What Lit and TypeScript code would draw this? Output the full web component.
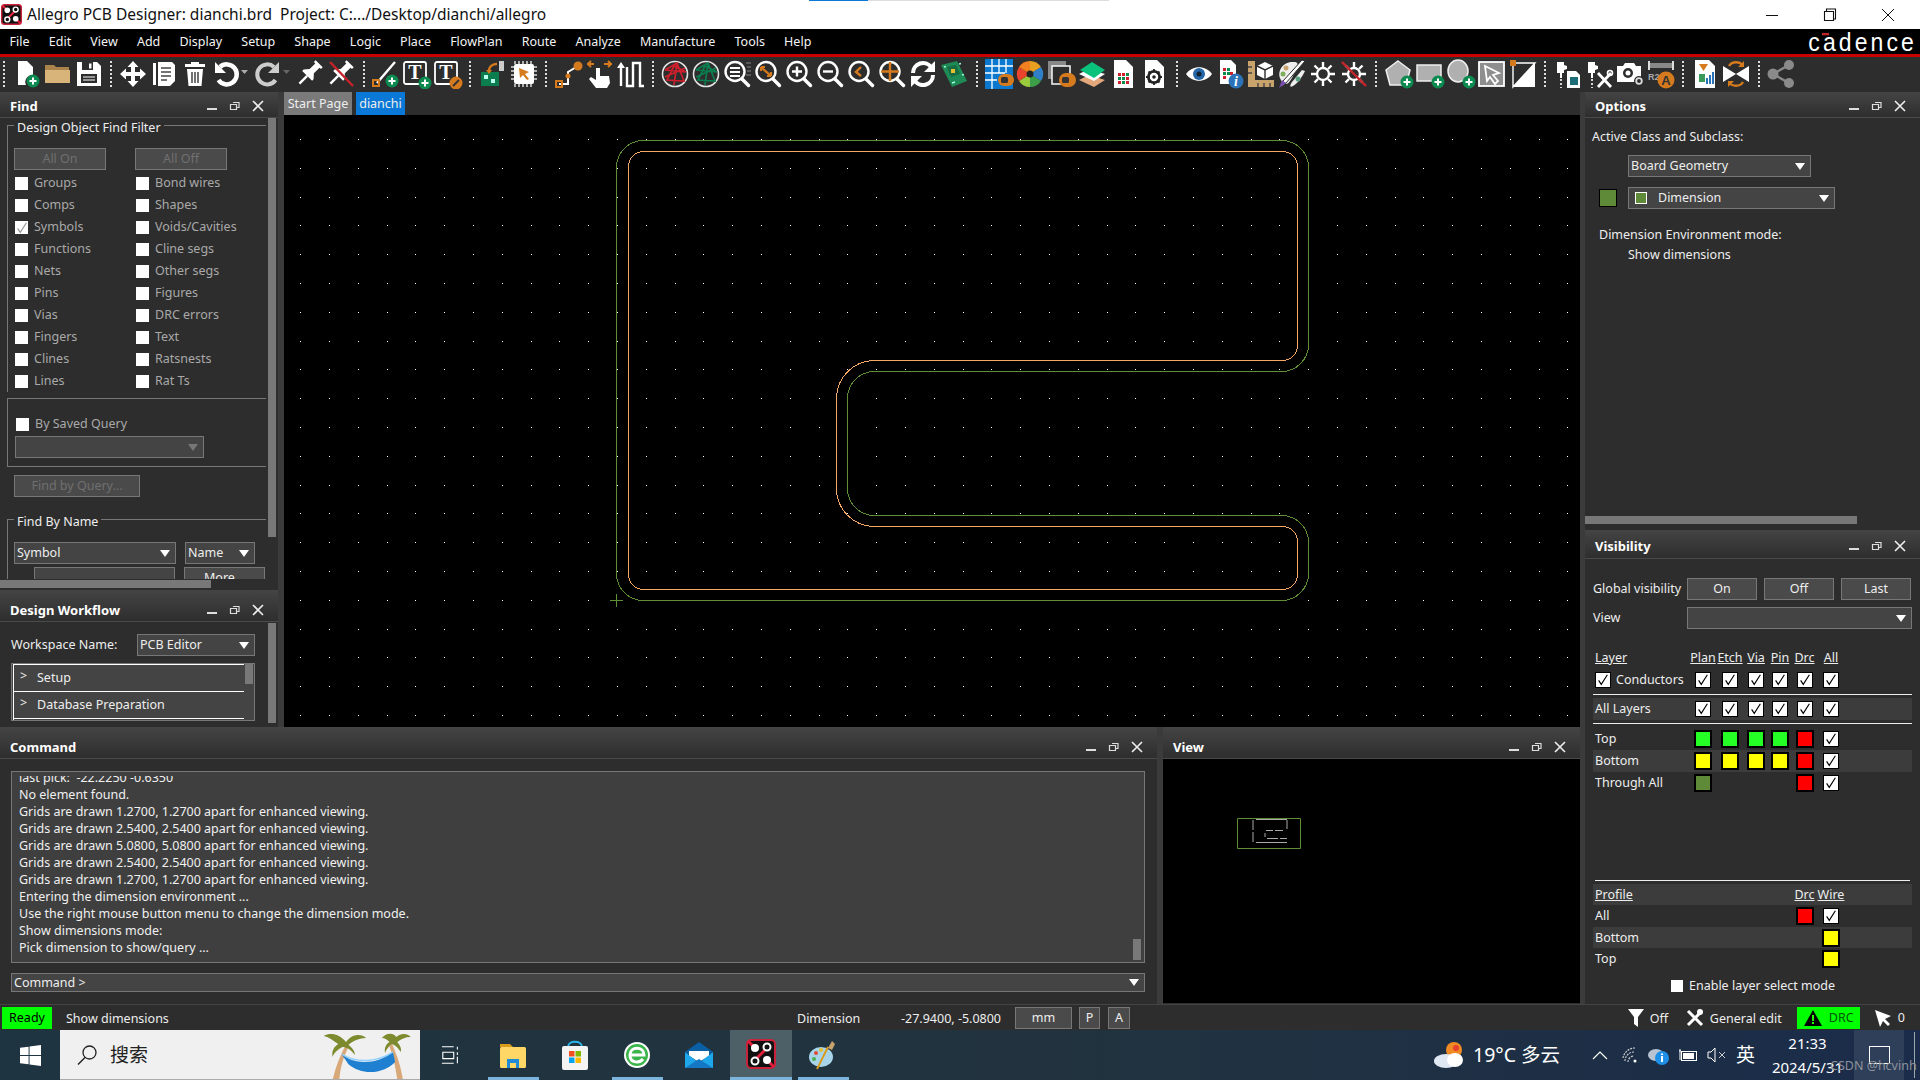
import { LitElement, css, html, svg } from "lit";
import { customElement } from "lit/decorators.js";

const ico = (body: unknown, w = 30) =>
  html`<svg class="ico" viewBox="0 0 ${w} 30" width=${w} height="30">${body}</svg>`;

const plus = (x: number, y: number) => svg`
  <circle cx=${x} cy=${y} r="6.5" fill="#0b8a50"/>
  <path d="M${x - 3.5} ${y}h7M${x} ${y - 3.5}v7" stroke="#fff" stroke-width="2"/>`;

const mag = (inner: unknown) =>
  ico(svg`<circle cx="13" cy="12.5" r="9.5" fill="none" stroke="#fff" stroke-width="2.4"/>
    <path d="M20 20l6.5 6.5" stroke="#fff" stroke-width="3.4" stroke-linecap="round"/>${inner}`);

const sun = svg`<circle cx="15" cy="15" r="6" fill="none" stroke="#fff" stroke-width="2.4"/>
  <path d="M15 3v5M15 22v5M3 15h5M22 15h5M6.5 6.5l3.5 3.5M20 20l3.5 3.5M23.5 6.5L20 10M10 20l-3.5 3.5" stroke="#fff" stroke-width="2.4"/>`;

const pin = svg`<g transform="rotate(45 15 14)"><path d="M10 1h10v2.5h-2v8l4 4.5v2H8v-2l4-4.5v-8h-2z" fill="#fff"/>
  <path d="M15 18v11" stroke="#fff" stroke-width="2.4"/></g>`;

const ratsnest = (c: string) =>
  ico(svg`<circle cx="15" cy="15" r="12.5" fill="none" stroke="#e4e4e4" stroke-width="1.6"/>
    <path d="M5 11L17 4 24 22 7 21 14 7 26 13 5 11M17 4L14 26M5 18l20-9" fill="none" stroke=${c} stroke-width="1.7"/>`);

const toggle = svg`<rect x="14" y="15" width="16" height="12" rx="6" fill="#d67a1e"/><rect x="17" y="18" width="7" height="6" rx="1.5" fill="#333"/>`;

const probe = svg`<path d="M4 3h7v3l3 1v3l-3 1v3H9v5H7v-5H4z" fill="#fff"/><path d="M8 20v9" stroke="#fff" stroke-width="1.6" stroke-dasharray="2 2"/>`;

const ICONS: Record<string, unknown> = {
  new: ico(svg`<path d="M6 2h9l6 6v8a7 7 0 0 0-7 10H6z" fill="#fff"/>${plus(21, 22)}`),
  open: ico(svg`<path d="M2 6h9l2 2h13v4H2z" fill="#a9834a"/><path d="M2 11h25v13H2z" fill="#d8b47a"/>`),
  save: ico(svg`<path d="M3 3h20l4 4v20H3z" fill="#fff"/><rect x="8" y="3" width="11" height="8" fill="#2d2d2d"/><rect x="15" y="4.5" width="2.5" height="5" fill="#fff"/><rect x="7" y="15" width="16" height="9" fill="#2d2d2d"/><path d="M9 18h12M9 21h12" stroke="#fff"/>`),
  move: ico(svg`<path d="M15 2l5.5 6H17v5h5V9.5l6 5.5-6 5.5V17h-5v5h3.5L15 28l-5.5-6H13v-5H8v3.5L2 15l6-5.5V13h5V8H9.5z" fill="#fff"/>`),
  copy: ico(svg`<path d="M4 4h3v22H4z" fill="#fff"/><path d="M9 3h14l3 3v16l-5 5H9z" fill="#fff"/><path d="M12 9h10M12 13h10M12 17h10M12 21h6" stroke="#444" stroke-width="1.5"/>`),
  trash: ico(svg`<path d="M11 3h8v2h6v3H5V5h6z" fill="#fff"/><path d="M7 10h16l-1.5 17h-13z" fill="#fff"/><path d="M12 13v11M15 13v11M18 13v11" stroke="#444" stroke-width="1.5"/>`),
  undo: ico(svg`<path d="M9 8a10 10 0 1 1-1.5 13" fill="none" stroke="#fff" stroke-width="4.5"/><path d="M4 3v11h11z" fill="#fff"/><path d="M30 11h7l-3.5 4z" fill="#aaa"/>`, 42),
  redo: ico(svg`<path d="M21 8a10 10 0 1 0 1.5 13" fill="none" stroke="#ccc" stroke-width="4"/><path d="M26 3v11H15z" fill="#ccc"/><path d="M30 11h7l-3.5 4z" fill="#666"/>`, 42),
  pin: ico(pin),
  unpin: ico(svg`${pin}<path d="M4 3l23 24" stroke="#c8232a" stroke-width="2.4"/>`),
  line: ico(svg`<path d="M6 24L24 3" stroke="#fff" stroke-width="2.4"/><rect x="2" y="21" width="6" height="6" fill="none" stroke="#d67a1e" stroke-width="2"/>${plus(21, 22)}`),
  textAdd: ico(svg`<rect x="2" y="3" width="22" height="22" rx="2" fill="none" stroke="#fff" stroke-width="1.8"/><text x="13" y="20" text-anchor="middle" font-family="Liberation Serif" font-weight="700" font-size="20" fill="#fff">T</text>${plus(23, 24)}`),
  textEdit: ico(svg`<rect x="2" y="3" width="22" height="22" rx="2" fill="none" stroke="#fff" stroke-width="1.8"/><text x="13" y="20" text-anchor="middle" font-family="Liberation Serif" font-weight="700" font-size="20" fill="#fff">T</text><circle cx="23" cy="24" r="6.5" fill="#d67a1e"/><path d="M20 27l6-6" stroke="#333" stroke-width="2"/>`),
  place: ico(svg`<rect x="3" y="13" width="18" height="14" fill="#0b7d4e"/><rect x="6" y="16" width="4" height="4" fill="#bfe"/><rect x="13" y="20" width="4" height="4" fill="#bfe"/><path d="M11 12c0-5 4-7 8-7" fill="none" stroke="#d67a1e" stroke-width="2.4"/><path d="M8 11h6l-3 4z" fill="#d67a1e"/><rect x="21" y="2" width="5" height="10" fill="#ccc"/>`),
  chip: ico(svg`<path d="M6 2v3M10 2v3M14 2v3M18 2v3M22 2v3M6 25v3M10 25v3M14 25v3M18 25v3M22 25v3M2 8h3M2 12h3M2 16h3M2 20h3M25 8h3M25 12h3M25 16h3M25 20h3" stroke="#ddd" stroke-width="1.5"/><rect x="5" y="5" width="20" height="20" rx="2" fill="#fff"/><path d="M10 9l10 4-4 2 4 5-2 1-4-5-3 3z" fill="#d67a1e"/>`),
  route: ico(svg`<path d="M5 25h9V13l10-6" fill="none" stroke="#fff" stroke-width="2"/><circle cx="24" cy="7" r="4.5" fill="#d67a1e"/><rect x="2" y="22" width="6" height="6" fill="none" stroke="#d67a1e" stroke-width="2"/><circle cx="14" cy="17" r="2.5" fill="#d67a1e"/>`),
  hand: ico(svg`<path d="M11 9h4v8h9l1 7-3 5H11l-7-9 2-2 5 3z" fill="#fff"/><path d="M2 5h7M3 5l3-3M3 5l3 3M19 5h8M26 5l-3-3M26 5l-3 3" stroke="#d67a1e" stroke-width="2" fill="none"/>`),
  tune: ico(svg`<path d="M5 27V6M11 8v19h6V4h7v23h4" fill="none" stroke="#fff" stroke-width="2.4"/><path d="M1 9h8L5 3z" fill="#fff"/>`),
  ratsR: ratsnest("#d01f2c"),
  ratsG: ratsnest("#0b7d4e"),
  zoomFit: mag(svg`<path d="M8 9h10M8 13h10M8 17h10" stroke="#fff" stroke-width="2"/><path d="M24 4h5M25 8h4M25 12h4M24 16h5" stroke="#888"/>`),
  zoomDiag: mag(svg`<path d="M8 8l10 9M8 8v4M8 8h4M18 17v-4M18 17h-4" stroke="#d67a1e" stroke-width="2.2" fill="none"/>`),
  zoomIn: mag(svg`<path d="M8 12.5h10M13 7.5v10" stroke="#fff" stroke-width="2.4"/>`),
  zoomOut: mag(svg`<path d="M8 12.5h10" stroke="#fff" stroke-width="2.4"/>`),
  zoomPrev: mag(svg`<path d="M15 8l-5 5 5 4" stroke="#d67a1e" stroke-width="2.4" fill="none"/>`),
  zoomCenter: mag(svg`<path d="M4 12.5h18M13 3v19" stroke="#d67a1e" stroke-width="2.4"/>`),
  refresh: ico(svg`<path d="M5 14A10 10 0 0 1 23 8" fill="none" stroke="#fff" stroke-width="4"/><path d="M27 2v11H16z" fill="#fff"/><path d="M25 16A10 10 0 0 1 7 22" fill="none" stroke="#fff" stroke-width="4"/><path d="M3 28V17h11z" fill="#fff"/>`),
  board: ico(svg`<path d="M2 6L18 2l10 20-15 6z" fill="#1f8a55"/><path d="M8 8l9-2 4 9-9 3z" fill="#166b42"/><rect x="12" y="10" width="4" height="4" fill="#e6c02c"/><path d="M5 8l2-.5M20 5l2-.5M23 16l2-.5M13 24l3-1" stroke="#9fd" stroke-width="1.5"/>`),
  grid: ico(svg`<rect x="1" y="0" width="28" height="30" fill="#0b78d0"/><path d="M1 7h28M1 14h20M1 21h12M8 0v30M15 0v14M22 0v14" stroke="#fff" stroke-width="1.3"/>${toggle}`),
  wheel: ico(svg`<path d="M15 15V2a13 13 0 0 1 11 6z" fill="#e8a020"/><path d="M15 15l11-7a13 13 0 0 1 0 14z" fill="#2f80c8"/><path d="M15 15l11 7a13 13 0 0 1-11 6z" fill="#3d9e4a"/><path d="M15 15v13a13 13 0 0 1-11-6z" fill="#9acb3c"/><path d="M15 15L4 22a13 13 0 0 1 0-14z" fill="#e8452c"/><path d="M15 15L4 8a13 13 0 0 1 11-6z" fill="#f08020"/><circle cx="15" cy="15" r="3.5" fill="#222"/>`),
  layers: ico(svg`<rect x="2" y="2" width="18" height="18" fill="#888"/><rect x="6" y="7" width="18" height="18" fill="#2d2d2d" stroke="#eee" stroke-width="1.6"/><rect x="13" y="14" width="17" height="14" rx="7" fill="#d67a1e"/><rect x="16" y="18" width="7" height="6" rx="1.5" fill="#333"/>`),
  stack: ico(svg`<path d="M2 21l10-5 16 5-11 7z" fill="#e3a77c"/><path d="M2 15l10-5 16 5-11 7z" fill="#fff"/><path d="M3 11l12-8 13 8-11 8z" fill="#0bc27c"/>`),
  docGrid: ico(svg`<path d="M6 1h12l7 7v21H6z" fill="#fff"/><path d="M10 14h3v3h-3zM14 14h3v3h-3zM10 22h3v3h-3zM18 18h3v3h-3zM18 22h3v3h-3z" fill="#d01f2c"/><path d="M18 14h3v3h-3zM10 18h3v3h-3zM14 18h3v3h-3zM14 22h3v3h-3z" fill="#0b8a50"/>`),
  docGear: ico(svg`<path d="M6 1h12l7 7v21H6z" fill="#fff"/><circle cx="15" cy="18" r="5.5" fill="none" stroke="#222" stroke-width="3"/><path d="M15 10v16M7 18h16M9.5 12.5l11 11M20.5 12.5l-11 11" stroke="#222" stroke-width="1.8"/><circle cx="15" cy="18" r="4.2" fill="#fff"/><circle cx="15" cy="18" r="1.8" fill="#222"/>`),
  eye: ico(svg`<path d="M2 15C8 6 22 6 28 15 22 24 8 24 2 15z" fill="#fff"/><circle cx="15" cy="15" r="6" fill="#2466a8"/><circle cx="15" cy="15" r="2.5" fill="#123"/>`),
  docInfo: ico(svg`<path d="M5 1h11l5 5v19H5z" fill="#fff"/><path d="M8 9h3v3H8zM8 17h3v3H8zM15 13h3v3h-3z" fill="#d01f2c"/><path d="M12 9h3v3h-3zM12 13h3v3h-3zM8 13h3v3H8z" fill="#0b8a50"/><circle cx="21" cy="22" r="7.5" fill="#2a73b8"/><text x="21" y="27" text-anchor="middle" font-family="Liberation Serif" font-style="italic" font-weight="700" font-size="14" fill="#fff">i</text>`),
  ruler: ico(svg`<path d="M2 2h7v19h19v7H2z" fill="#c9a36c"/><path d="M2 8h4M2 14h4M12 28v-4M18 28v-4M24 28v-4" stroke="#444" stroke-width="1.4"/><path d="M19 3l8 4v9l-8 4-8-4V7z" fill="#fff"/><path d="M11 7l8 4 8-4M19 11v9" stroke="#2d2d2d" stroke-width="1.4" fill="none"/>`),
  palette: ico(svg`<path d="M3 19C0 10 8 2 17 3c3 0 5 2 3 5-2 4-4 10-7 14-3 5-8 3-10-3z" fill="#eee"/><circle cx="9" cy="9" r="2.5" fill="#c9a36c"/><circle cx="6" cy="15" r="2.5" fill="#7fae5a"/><path d="M28 2L9 24l-5 4 2-6L25 1z" fill="#fff" stroke="#2d2d2d"/><path d="M9 24l-7 5 3-8z" fill="#7a4bb0"/><path d="M28 12c-3 6-7 12-12 15-4 2-3-1-1-4l10-12z" fill="#eee"/><circle cx="21" cy="20" r="2.5" fill="#5aa080"/>`),
  sun: ico(sun),
  sunOff: ico(svg`${sun}<path d="M3 3l24 24" stroke="#c8232a" stroke-width="2.4"/>`),
  polyAdd: ico(svg`<path d="M14 2l12 9-4 15H6L2 11z" fill="#b0b0b0" stroke="#eee" stroke-width="1.5"/>${plus(23, 23)}`),
  rectAdd: ico(svg`<rect x="2" y="6" width="24" height="16" fill="#b0b0b0" stroke="#eee" stroke-width="1.5"/>${plus(23, 23)}`),
  circAdd: ico(svg`<ellipse cx="12" cy="12" rx="10" ry="11" fill="#b0b0b0" stroke="#eee" stroke-width="1.5"/>${plus(23, 23)}`),
  select: ico(svg`<rect x="2" y="3" width="25" height="24" fill="#8e8e8e" stroke="#fff" stroke-width="1.8"/><path d="M8 7l14 7-6 2 5 6-3 3-5-7-3 4z" fill="#8e8e8e" stroke="#fff" stroke-width="1.8"/>`),
  half: ico(svg`<path d="M5 4h22v24z" fill="#2d2d2d"/><path d="M5 28L27 4v24z" fill="#fff"/><path d="M5 4h22L5 28z" fill="none" stroke="#fff" stroke-width="1.4"/><rect x="2" y="1" width="6" height="6" fill="#d67a1e"/>`),
  probeDoc: ico(svg`${probe}<path d="M14 12h9l4 4v13H14z" fill="#fff"/><rect x="17" y="18" width="8" height="8" fill="#1d6d78"/>`),
  probeTool: ico(svg`${probe}<path d="M14 14l13 14M27 14L14 28" stroke="#fff" stroke-width="2.8"/><circle cx="26" cy="14" r="2.5" fill="none" stroke="#fff" stroke-width="1.6"/>`),
  camera: ico(svg`<path d="M2 7h6l2-3h9l2 3h5v16H2z" fill="#fff"/><circle cx="13" cy="14" r="5" fill="#2d2d2d"/><circle cx="13" cy="14" r="2.5" fill="#fff"/><circle cx="24" cy="22" r="5" fill="#2d2d2d"/><circle cx="24" cy="22" r="2.8" fill="none" stroke="#ddd" stroke-width="1.8"/>`),
  r2a: ico(svg`<rect x="4" y="4" width="22" height="5" fill="#888"/><path d="M3 2v9M27 2v9" stroke="#ddd" stroke-width="2"/><text x="2" y="21" font-family="Liberation Sans" font-weight="700" font-size="9" fill="#aaa">R2</text><circle cx="20" cy="21" r="8.5" fill="#d67a1e"/><text x="20" y="26" text-anchor="middle" font-family="Liberation Sans" font-weight="700" font-size="13" fill="#333">A</text>`),
  docChart: ico(svg`<path d="M5 1h14l6 6v22H5z" fill="#fff"/><path d="M9 5h9l-4.5 7z" fill="#d67a1e"/><rect x="9" y="15" width="6" height="8" fill="#3a9a5a"/><path d="M17 25v-6M20 25v-9M23 25v-12" stroke="#2a73b8" stroke-width="2"/>`),
  swap: ico(svg`<path d="M2 7l13 8-13 8zM28 7l-13 8 13 8z" fill="#fff"/><path d="M8 7c3-5 11-5 14 0M8 23c3 5 11 5 14 0" fill="none" stroke="#d67a1e" stroke-width="2.4"/><path d="M23 2v6h-6zM7 28v-6h6z" fill="#d67a1e"/>`),
  share: ico(svg`<path d="M23 6L7 15l16 9" fill="none" stroke="#8a8a8a" stroke-width="2.4"/><circle cx="23" cy="6" r="5" fill="#8a8a8a"/><circle cx="7" cy="15" r="5.5" fill="#8a8a8a"/><circle cx="23" cy="24" r="5" fill="#8a8a8a"/>`),
};

const TOOLBAR = [
  ["new", "open", "save"],
  ["move", "copy", "trash", "undo", "redo", "pin", "unpin"],
  ["line", "textAdd", "textEdit"],
  ["place", "chip"],
  ["route", "hand", "tune"],
  ["ratsR", "ratsG", "zoomFit", "zoomDiag", "zoomIn", "zoomOut", "zoomPrev", "zoomCenter", "refresh", "board"],
  ["grid", "wheel", "layers", "stack", "docGrid", "docGear"],
  ["eye", "docInfo", "ruler", "palette", "sun", "sunOff"],
  ["polyAdd", "rectAdd", "circAdd", "select", "half"],
  ["probeDoc", "probeTool", "camera", "r2a"],
  ["docChart", "swap"],
  ["share"],
];

const MENU = ["File", "Edit", "View", "Add", "Display", "Setup", "Shape", "Logic", "Place", "FlowPlan", "Route", "Analyze", "Manufacture", "Tools", "Help"];

const FILTERS = [
  ["Groups", "Bond wires"], ["Comps", "Shapes"], ["Symbols", "Voids/Cavities"], ["Functions", "Cline segs"], ["Nets", "Other segs"],
  ["Pins", "Figures"], ["Vias", "DRC errors"], ["Fingers", "Text"], ["Clines", "Ratsnests"], ["Lines", "Rat Ts"],
];

const LOG = [
  "last pick:  -22.2250 -0.6350",
  "No element found.",
  "Grids are drawn 1.2700, 1.2700 apart for enhanced viewing.",
  "Grids are drawn 2.5400, 2.5400 apart for enhanced viewing.",
  "Grids are drawn 5.0800, 5.0800 apart for enhanced viewing.",
  "Grids are drawn 2.5400, 2.5400 apart for enhanced viewing.",
  "Grids are drawn 1.2700, 1.2700 apart for enhanced viewing.",
  "Entering the dimension environment ...",
  "Use the right mouse button menu to change the dimension mode.",
  "Show dimensions mode:",
  "Pick dimension to show/query ...",
];

const G = "#25ff25";
const Y = "#ffff00";
const R = "#ff0000";
const D = "#5f8a38";
const LAYERS: [string, (string | null)[], boolean][] = [
  ["Top", [G, G, G, G, R], false],
  ["Bottom", [Y, Y, Y, Y, R], true],
  ["Through All", [D, null, null, null, R], false],
];

// dot grid of the canvas, one path so the DOM stays small
function gridDots() {
  let d = "";
  for (let i = -12; i < 35; i++) {
    for (let j = -1; j < 21; j++) {
      d += `M${Math.round(617 + i * 28.8)} ${Math.round(139 + j * 28.8)}h1v1h-1z`;
    }
  }
  return d;
}

function outline(l: number, t: number, r: number, b: number, ny1: number, nx: number, ny2: number, rc: number, rn: number) {
  return `M${l + rc} ${t}H${r - rc}A${rc} ${rc} 0 0 1 ${r} ${t + rc}V${ny1 - rc}A${rc} ${rc} 0 0 1 ${r - rc} ${ny1}H${nx + rn}A${rn} ${rn} 0 0 0 ${nx} ${ny1 + rn}V${ny2 - rn}A${rn} ${rn} 0 0 0 ${nx + rn} ${ny2}H${r - rc}A${rc} ${rc} 0 0 1 ${r} ${ny2 + rc}V${b - rc}A${rc} ${rc} 0 0 1 ${r - rc} ${b}H${l + rc}A${rc} ${rc} 0 0 1 ${l} ${b - rc}V${t + rc}A${rc} ${rc} 0 0 1 ${l + rc} ${t}Z`;
}

const tick = html`<svg viewBox="0 0 16 16" width="14" height="14"><path d="M3 8.5l3 4.5 7-11" fill="none" stroke="#000" stroke-width="1.3"/></svg>`;
const check = (on = true) => html`<span class="chk">${on ? tick : ""}</span>`;
const swatch = (c: string) => html`<span class="swatch" style="background:${c}"></span>`;

const allegroLogo = (s: number) => html`<svg viewBox="0 0 30 30" width=${s} height=${s}>
  <rect x="1" y="1" width="28" height="28" rx="4" fill="#111" stroke="#c8233a" stroke-width="2"/>
  <path d="M2 2l7 7M28 28l-7-7M10 20L20 10" stroke="#e0203a" stroke-width="3"/>
  <circle cx="9" cy="9" r="4" fill="#fff"/><circle cx="21" cy="8" r="3.5" fill="#111" stroke="#fff" stroke-width="2"/>
  <circle cx="9" cy="22" r="3.5" fill="#111" stroke="#fff" stroke-width="2"/><circle cx="21" cy="21" r="4" fill="#fff"/>
</svg>`;

@customElement("app-root")
export class AppRoot extends LitElement {
  dock(title: string, big = false) {
    return html`<div class="dock-head ${big ? "big" : ""}">
      <span class="dock-title">${title}</span>
      <span class="dock-btns">
        <svg viewBox="0 0 12 12" width="12" height="12"><path d="M1 9h10" stroke="#ddd" stroke-width="2"/></svg>
        <svg viewBox="0 0 12 12" width="12" height="12"><path d="M4 2.5h6v5H8M1.5 4.5h6v5h-6z" fill="none" stroke="#ddd" stroke-width="1.2"/></svg>
        <svg viewBox="0 0 12 12" width="12" height="12"><path d="M1 1l10 10M11 1L1 11" stroke="#eee" stroke-width="1.6"/></svg>
      </span>
    </div>`;
  }

  findPanel() {
    return html`<section class="find">
      ${this.dock("Find")}
      <div class="find-body">
        <div class="find-scroll">
          <div class="frame">
            <span class="legend">Design Object Find Filter</span>
            <div class="two">
              <span class="btn off w92">All On</span>
              <span class="btn off w92">All Off</span>
            </div>
            <div class="filters">
              ${FILTERS.map((r, i) => html`
                <label class="f">${i === 2 ? html`<span class="chk dim">${tick}</span>` : check(false)}${r[0]}</label>
                <label class="f">${check(false)}${r[1]}</label>`)}
            </div>
          </div>
          <div class="frame query">
            <label class="f saved">${check(false)}By Saved Query</label>
            <span class="combo off w189"><i class="dn"></i></span>
          </div>
          <span class="btn off findq">Find by Query...</span>
          <div class="frame byname">
            <span class="legend">Find By Name</span>
            <div class="namerow">
              <span class="combo w162">Symbol<i></i></span>
              <span class="combo w70">Name<i></i></span>
            </div>
            <div class="namerow second">
              <span class="input"></span>
              <span class="btn more">More...</span>
            </div>
          </div>
        </div>
        <div class="vbar find-v"></div>
      </div>
      <div class="hbar"></div>
    </section>`;
  }

  workflowPanel() {
    return html`<section class="flow">
      ${this.dock("Design Workflow", true)}
      <div class="flow-body">
        <div class="flow-main">
          <div class="ws"><span>Workspace Name:</span><span class="combo w118">PCB Editor<i></i></span></div>
          <div class="tree">
            <div class="tree-rows">
              <div class="tree-row"><b>&gt;</b>Setup</div>
              <div class="tree-row"><b>&gt;</b>Database Preparation</div>
            </div>
            <div class="tree-thumb"></div>
          </div>
        </div>
        <div class="vbar flow-v"></div>
      </div>
    </section>`;
  }

  canvasPanel() {
    return html`<div class="stage">
      <div class="tabs"><span class="tab">Start Page</span><span class="tab on">dianchi</span></div>
      <svg class="board" viewBox="284 115 1296 612" width="1296" height="612" shape-rendering="crispEdges">
        <path d=${gridDots()} fill="#fff"/>
        <path d=${outline(616.5, 140.5, 1308.5, 600.5, 371.5, 847.5, 515.5, 27, 27)} fill="none" stroke="#5f8f35"/>
        <path d=${outline(628.5, 151.5, 1297.5, 589.5, 360.5, 836.5, 526.5, 15, 38)} fill="none" stroke="#f5a964"/>
        <path d="M610 600.5h13M616.5 594v13" stroke="#5f8f35"/>
      </svg>
    </div>`;
  }

  commandPanel() {
    return html`<section class="command">
      ${this.dock("Command", true)}
      <div class="cmd-body">
        <div class="log">
          <div class="log-clip"><div class="log-lines">${LOG.map((l) => html`<div>${l}</div>`)}</div></div>
          <div class="log-thumb"></div>
        </div>
        <div class="cmd-input">Command &gt;<i></i></div>
      </div>
    </section>`;
  }

  viewPanel() {
    return html`<section class="view">
      ${this.dock("View", true)}
      <div class="mini">
        <svg viewBox="0 0 64 31" width="64" height="31">
          <path d="M.5.5h63v30H.5z" fill="none" stroke="#5f8f35"/>
          <path d="M19 1.5h31M16 2v10M16 14v10M50 2v9M19 24.5h31M29 12.5h7M38 12.5h8M28 15v4M30 20.5h11M43 20.5h7" stroke="#aaa" fill="none"/>
        </svg>
      </div>
    </section>`;
  }

  optionsPanel() {
    return html`<section class="options">
      ${this.dock("Options")}
      <div class="opt-body">
        <div class="opt-l1">Active Class and Subclass:</div>
        <span class="combo w183 opt-c1">Board Geometry<i></i></span>
        <div class="opt-row">
          <span class="opt-sw"></span>
          <span class="combo w207"><span class="mini-sw"></span>Dimension<i></i></span>
        </div>
        <div class="opt-l2">Dimension Environment mode:</div>
        <div class="opt-l3">Show dimensions</div>
      </div>
      <div class="hbar opt-h"></div>
    </section>`;
  }

  visibilityPanel() {
    return html`<section class="vis">
      ${this.dock("Visibility")}
      <div class="vis-body">
        <div class="gv"><span class="gv-l">Global visibility</span>
          <span class="btn gvb">On</span><span class="btn gvb">Off</span><span class="btn gvb">Last</span></div>
        <div class="gv second"><span class="gv-l">View</span><span class="combo w225"><i></i></span></div>
        <div class="grid head">
          <u>Layer</u><u>Plan</u><u>Etch</u><u>Via</u><u>Pin</u><u>Drc</u><u>All</u>
        </div>
        <div class="grid cond">
          <span class="cond-l">${check()}Conductors</span>
          ${[0, 1, 2, 3, 4, 5].map(() => check())}
        </div>
        <div class="grid ruled alt">
          <span>All Layers</span>${[0, 1, 2, 3, 4, 5].map(() => check())}
        </div>
        ${LAYERS.map(([n, c, alt]) => html`<div class="grid lay ${alt ? "alt" : ""}">
          <span>${n}</span>
          ${c.map((x) => (x ? swatch(x) : html`<span></span>`))}
          ${check()}
        </div>`)}
        <div class="grid prof-head alt">
          <u>Profile</u><span></span><span></span><span></span><span></span><u>Drc</u><u>Wire</u>
        </div>
        <div class="grid prof first"><span>All</span><span></span><span></span><span></span><span></span>${swatch(R)}${check()}</div>
        <div class="grid prof alt"><span>Bottom</span><span></span><span></span><span></span><span></span><span></span>${swatch(Y)}</div>
        <div class="grid prof"><span>Top</span><span></span><span></span><span></span><span></span><span></span>${swatch(Y)}</div>
        <div class="enable">${check(false)}Enable layer select mode</div>
      </div>
    </section>`;
  }

  statusBar() {
    return html`<footer class="status">
      <span class="ready">Ready</span>
      <span class="s-msg">Show dimensions</span>
      <span class="s-dim">Dimension</span>
      <span class="s-xy">-27.9400, -5.0800</span>
      <span class="btn s-mm">mm</span>
      <span class="btn s-p">P</span>
      <span class="btn s-a">A</span>
      <span class="s-right">
        <svg class="s-filter" viewBox="0 0 16 18" width="16" height="18"><path d="M0 0h16l-6 8v10l-4-3V8z" fill="#fff"/></svg>
        <span class="s-off">Off</span>
        <svg class="s-tool" viewBox="0 0 18 18" width="18" height="18"><path d="M2 2l14 14M16 2L2 16" stroke="#fff" stroke-width="3"/><circle cx="14" cy="3" r="3" fill="#fff"/></svg>
        <span class="s-edit">General edit</span>
        <span class="s-drc"><svg viewBox="0 0 18 16" width="18" height="16"><path d="M9 0l9 16H0z" fill="#000"/><path d="M9 5v6M9 12v2" stroke="#25ff00" stroke-width="2"/></svg>DRC</span>
        <svg class="s-cur" viewBox="0 0 18 18" width="18" height="18"><path d="M1 1l16 6-6 3 5 5-2 2-5-5-3 6z" fill="#fff"/></svg>
        <span>0</span>
      </span>
    </footer>`;
  }

  taskbar() {
    return html`<footer class="task">
      <span class="start"><svg viewBox="0 0 22 22" width="21" height="21"><path d="M0 3l9-1.200V10.500H0zM10 1.600L22 0v10.500H10zM0 11.500h9v8.700L0 19zM10 11.500h12V22l-12-1.600z" fill="#fff"/></svg></span>
      <span class="search">
        <svg viewBox="0 0 22 22" width="22" height="22"><circle cx="13.5" cy="8.5" r="6.5" fill="none" stroke="#222" stroke-width="1.3"/><path d="M9 13.5L2 20.5" stroke="#222" stroke-width="1.5"/></svg>
        <span class="search-t">搜索</span>
        <svg class="palms" viewBox="0 0 86 50" width="96" height="50" preserveAspectRatio="none">
          <path d="M14 50c3-14 6-22 12-36l3 1c-6 14-8 22-9 35zM72 50c-2-14-3-22-8-36l3-1c5 14 8 22 10 37z" fill="#d9a878"/>
          <path d="M6 6c6-4 14-2 20 6 6-9 14-8 18-4-6 0-12 3-16 7 3 2 6 6 6 10-4-6-8-8-11-8-4 2-8 6-9 10-1-6 1-10 5-13-4-3-8-7-13-8z" fill="#7d8a2e"/>
          <path d="M58 8c4-5 10-6 13-1 4-4 10-4 13 0-5 0-9 2-12 5 2 3 4 6 3 10-3-5-5-7-8-8-3 2-5 6-6 9-1-5 1-9 4-11-2-2-4-4-7-4z" fill="#7d8a2e"/>
          <path d="M22 24c10 10 30 12 46-2l2 10c-10 12-30 14-42 2z" fill="#1f7fd0"/>
          <path d="M22 24c14 10 32 8 46-2" fill="none" stroke="#8fd0ff" stroke-width="1.5"/>
        </svg>
      </span>
      <span class="cell"><svg viewBox="0 0 22 22" width="20" height="22"><path d="M1 2h13M1 20h13M2 8h12v7H2zM18 2v3M18 8v3M18 13v7" fill="none" stroke="#fff" stroke-width="1.2"/></svg></span>
      <span class="cell u"><svg viewBox="0 0 30 30" width="30" height="30"><path d="M2 4h10l3 3H2z" fill="#d99b1c"/><rect x="2" y="7" width="26" height="21" rx="1.5" fill="#ffd766"/><path d="M9 28V19h12v9h-3v-5h-6v5z" fill="#1f8ad6"/></svg></span>
      <span class="cell"><svg viewBox="0 0 30 30" width="30" height="30"><path d="M8 7C8 0 22 0 22 7" fill="none" stroke="#29b6e8" stroke-width="2"/><rect x="2" y="6" width="26" height="24" rx="2" fill="#f4f4f4"/><rect x="9" y="11" width="5.5" height="5.5" fill="#f25022"/><rect x="15.5" y="11" width="5.5" height="5.5" fill="#7fba00"/><rect x="9" y="17.5" width="5.5" height="5.5" fill="#00a4ef"/><rect x="15.5" y="17.5" width="5.5" height="5.5" fill="#ffb900"/></svg></span>
      <span class="cell u"><svg viewBox="0 0 30 30" width="30" height="30"><circle cx="15" cy="15" r="13" fill="#fff"/><circle cx="15" cy="15" r="11" fill="#3bb54a"/><path d="M7 15h15c0-9-14-9-14 0s10 8 13 4" fill="none" stroke="#fff" stroke-width="3"/></svg></span>
      <span class="cell"><svg viewBox="0 0 30 30" width="30" height="30"><path d="M1 12L15 2l14 10-14 9z" fill="#0b5fa5"/><path d="M5 11h20v5l-10 6-10-6z" fill="#fff"/><path d="M1 12l14 11 14-11v16H1z" fill="#1ea7ea"/><path d="M1 28l14-9 14 9z" fill="#1377c4"/></svg></span>
      <span class="cell active">${allegroLogo(30)}</span>
      <span class="cell u"><svg viewBox="0 0 30 30" width="30" height="30"><ellipse cx="13" cy="17" rx="12" ry="10" fill="#a8d4ea"/><circle cx="8" cy="13" r="2" fill="#e04b3a"/><circle cx="13" cy="10" r="2" fill="#e8c02c"/><circle cx="6" cy="19" r="2" fill="#4caf50"/><path d="M9 29L20 7" stroke="#d99b1c" stroke-width="2"/><path d="M20 8l4-7 3 3-3 6z" fill="#c9a36c"/></svg></span>
      <span class="tray">
        <svg class="weather" viewBox="0 0 36 30" width="36" height="30"><circle cx="22" cy="10" r="8" fill="#f08a24"/><circle cx="24" cy="8" r="3" fill="#e8402c"/><ellipse cx="14" cy="21" rx="12" ry="7" fill="#dfe7f2"/><ellipse cx="23" cy="20" rx="8" ry="7" fill="#fff"/></svg>
        <span class="temp">19°C 多云</span>
        <svg class="t1" viewBox="0 0 16 10" width="16" height="10"><path d="M1 9l7-7 7 7" fill="none" stroke="#fff" stroke-width="1.2"/></svg>
        <svg class="t2" viewBox="0 0 18 18" width="18" height="18"><path d="M1 12a12 12 0 0 1 12-10M3 15a9 9 0 0 1 9-9M6 16a6 6 0 0 1 6-6" fill="none" stroke="#ccc" stroke-width="1.2" stroke-dasharray="2 1"/><circle cx="13" cy="15" r="1.5" fill="#fff"/></svg>
        <svg class="t3" viewBox="0 0 22 20" width="22" height="20"><ellipse cx="9" cy="10" rx="8" ry="6" fill="#b9c4d2"/><circle cx="15" cy="13" r="7" fill="#1e90e8"/><path d="M15 11v6M15 8.5V10" stroke="#fff" stroke-width="2"/></svg>
        <svg class="t4" viewBox="0 0 20 14" width="20" height="14"><path d="M1 3h2M2 1v11" stroke="#fff"/><rect x="3.5" y="3.5" width="15" height="9" fill="none" stroke="#fff"/><rect x="5" y="5" width="11" height="6" fill="#fff"/></svg>
        <svg class="t5" viewBox="0 0 20 16" width="20" height="16"><path d="M1 5h3l4-4v14l-4-4H1z" fill="none" stroke="#fff"/><path d="M12 5l6 6M18 5l-6 6" stroke="#ccc"/></svg>
        <span class="ime">英</span>
        <span class="clock"><span>21:33</span><span>2024/5/31</span></span>
        <span class="notify"><span class="notify-box"></span></span>
        <span class="t-line"></span>
      </span>
      <span class="mark">CSDN @hcvinh</span>
    </footer>`;
  }

  render() {
    return html`
      <header class="title">
        <span class="logo">${allegroLogo(21)}</span>
        <span class="title-t">Allegro PCB Designer: dianchi.brd&nbsp; Project: C:.../Desktop/dianchi/allegro</span>
        <span class="progress"><i></i><b></b></span>
        <span class="win">
          <svg viewBox="0 0 14 14" width="14" height="14"><path d="M1 7.5h12" stroke="#111"/></svg>
          <svg viewBox="0 0 14 14" width="14" height="14"><path d="M3.5 3V1h9v10h-2M1.5 3.5h9v9h-9z" fill="none" stroke="#111" stroke-width="1.1"/></svg>
          <svg viewBox="0 0 14 14" width="14" height="14"><path d="M1 1l12 12M13 1L1 13" stroke="#111"/></svg>
        </span>
      </header>
      <nav class="menu">
        ${MENU.map((m) => html`<span class="m">${m}</span>`)}
        <span class="cadence">cadence</span>
      </nav>
      <div class="toolbar">
        ${TOOLBAR.map((g) => html`<i class="sep"></i>${g.map(
          (n) => html`<span class="tool ${n === "undo" || n === "redo" ? "wide" : ""}">${ICONS[n]}</span>`
        )}`)}
      </div>
      <main class="main">
        <div class="work">
          <div class="upper">
            <div class="docks">${this.findPanel()}${this.workflowPanel()}</div>
            ${this.canvasPanel()}
          </div>
          <div class="lower">${this.commandPanel()}${this.viewPanel()}</div>
        </div>
        <aside class="right">${this.optionsPanel()}${this.visibilityPanel()}</aside>
      </main>
      ${this.statusBar()} ${this.taskbar()}
    `;
  }

  static styles = css`
    :host {
      display: flex;
      flex-direction: column;
      position: relative;
      width: 1920px;
      height: 1080px;
      overflow: hidden;
      background: #2d2d2d;
      color: #eee;
      font: 12.5px/16px "Noto Sans", "Noto Sans CJK SC", sans-serif;
    }
    svg { display: block; flex: none; }

    .title { height: 29px; flex: none; background: #fff; color: #111; display: flex; align-items: center; position: relative; }
    .logo { margin-left: 1px; }
    .title-t { margin: 0 0 2px 5px; font-size: 15.5px; white-space: pre; }
    .progress { position: absolute; top: 0; left: 809px; display: flex; }
    .progress i { width: 59px; height: 1px; background: #0a78d7; }
    .progress b { width: 241px; height: 1px; background: #ddd; }
    .win { margin-left: auto; display: flex; margin-right: 25px; gap: 44px; }

    .menu { height: 25px; flex: none; background: #000; border-bottom: 3px solid #c80000; display: flex; align-items: center; box-sizing: content-box; color: #f4f4f4; }
    .m { padding: 0 9.6px; }
    .cadence { margin-left: auto; margin-right: 3px; color: #fff; font-size: 23px; letter-spacing: 3.1px; position: relative; font-family: "Liberation Sans", sans-serif; transform: scaleY(1.12); }
    .cadence::before { content: ""; position: absolute; left: 14px; top: 0; width: 7px; height: 2px; background: #c8232a; }

    .toolbar { height: 35px; flex: none; box-sizing: border-box; padding-bottom: 2px; background: #2d2d2d; display: flex; align-items: center; }
    .sep { width: 2px; height: 26px; margin: 0 6px 0 3px; background: repeating-linear-gradient(#ddd 0 2px, transparent 2px 4px); }
    .sep:not(:first-child) { margin-left: 5.8px; }
    .tool { width: 31px; display: flex; justify-content: center; }
    .tool.wide { width: 42px; justify-content: flex-start; }

    .main { height: 912px; flex: none; display: flex; background: #3b3b3b; }
    .work { width: 1580px; display: flex; flex-direction: column; }
    .upper { height: 635px; display: flex; }
    .docks { width: 278px; margin-right: 6px; display: flex; flex-direction: column; background: #2d2d2d; }
    .lower { height: 277px; display: flex; }

    .dock-head { height: 26px; box-sizing: border-box; padding: 2px 0 0 10px; border-bottom: 1px solid #4a4a4a; background: linear-gradient(#444, #2e2e2e); display: flex; align-items: center; flex: none; font-weight: 700; font-size: 13px; color: #fff; }
    .dock-head.big { height: 32px; padding-top: 8px; }
    .vis .dock-head { height: 29px; padding-top: 3px; }
    .dock-btns { margin-left: auto; display: flex; gap: 11px; margin-right: 14px; }

    .btn { display: inline-flex; align-items: center; justify-content: center; box-sizing: border-box; height: 22px; border: 1px solid #777; background: #4a4a4a; color: #eee; }
    .btn.off { color: #6f6f6f; }
    .combo { display: inline-flex; align-items: center; box-sizing: border-box; height: 22px; border: 1px solid #777; background: #444; color: #eee; padding-left: 2px; position: relative; }
    .combo i, .cmd-input i { margin-left: auto; margin-right: 5px; width: 0; height: 0; border: 5.5px solid transparent; border-top: 7px solid #fff; border-bottom: 0; }
    .combo i.dn { border-top-color: #777; }
    .w92 { width: 92px; }
    .w189 { width: 189px; }
    .w162 { width: 162px; }
    .w70 { width: 70px; }
    .w118 { width: 118px; }
    .w183 { width: 183px; }
    .w207 { width: 207px; }
    .w225 { width: 225px; }

    .find { height: 498px; display: flex; flex-direction: column; overflow: hidden; }
    .find-body { height: 461px; display: flex; flex: none; }
    .find-scroll { width: 266px; overflow: hidden; flex: none; padding-left: 7px; box-sizing: border-box; }
    .vbar { width: 8px; margin-left: 2px; background: #787878; }
    .find-v { height: 419px; }
    .hbar { height: 8px; width: 211px; margin-top: 1px; background: #787878; }
    .frame { border-left: 1px solid #777; border-top: 1px solid #777; margin-top: 7px; }
    .legend { display: block; width: fit-content; margin: -6px 0 0 6px; padding: 0 3px; background: #2d2d2d; line-height: 16px; color: #eee; }
    .two { display: flex; gap: 29px; margin: 12px 0 0 6px; }
    .filters { display: grid; grid-template-columns: 121px 121px; grid-auto-rows: 22px; margin: 2px 0 6px 7px; }
    .f { display: flex; align-items: center; gap: 6px; color: #a9a9a9; }
    .chk { width: 14px; height: 14px; background: #fff; display: inline-flex; flex: none; box-shadow: 0 0 0 1px #000; }
    .f .chk { width: 13px; height: 13px; box-shadow: none; }
    .chk.dim svg { opacity: .4; }
    .query { margin-top: 0; height: 67px; border-bottom: 1px solid #777; padding-left: 7px; }
    .saved { height: 16px; margin: 17px 0 4px 1px; }
    .query .combo { display: flex; }
    .findq { display: flex; width: 126px; margin: 8px 0 0 7px; }
    .byname { margin-top: 22px; }
    .namerow { display: flex; gap: 9px; margin: 12px 0 0 6px; }
    .namerow.second { margin: 3px 0 0 6px; }
    .input { width: 141px; height: 22px; margin-left: 20px; box-sizing: border-box; border: 1px solid #777; background: #444; }
    .more { width: 81px; }

    .flow { flex: 1; display: flex; flex-direction: column; min-height: 0; }
    .flow-body { flex: 1; display: flex; }
    .flow-main { width: 266px; flex: none; }
    .flow-v { height: 100px; margin-top: 1px; }
    .ws { display: flex; align-items: center; padding: 12px 0 0 11px; }
    .ws span:first-child { width: 126px; }
    .tree { margin: 7px 0 0 11px; width: 244px; height: 58px; box-sizing: border-box; border: 1px solid #777; background: #444; display: flex; padding-left: 1px; }
    .tree-rows { width: 230px; border-top: 1px solid #fff; border-left: 1px solid #fff; }
    .tree-row { height: 26px; border-bottom: 1px solid #fff; display: flex; align-items: center; padding-left: 23px; position: relative; }
    .tree-row b { position: absolute; left: 6px; top: 3px; font-weight: 400; }
    .tree-thumb { width: 8px; height: 20px; margin-left: 1px; background: #787878; }

    .stage { flex: 1; display: flex; flex-direction: column; }
    .tabs { height: 23px; background: #2d2d2d; display: flex; gap: 4px; flex: none; }
    .tab { width: 68px; background: #7a7a7a; display: flex; align-items: center; justify-content: center; }
    .tab.on { width: 49px; background: #0a78d7; }
    .board { background: #000; flex: none; }

    .command { width: 1157px; background: #2d2d2d; display: flex; flex-direction: column; }
    .cmd-body { padding: 12px 12px 0 11px; }
    .log { height: 192px; box-sizing: border-box; border: 1px solid #777; background: #3f3f3f; position: relative; overflow: hidden; }
    .log-clip { margin-top: 4px; height: 186px; overflow: hidden; }
    .log-lines { margin-top: -7px; padding-left: 7px; }
    .log-lines div { height: 17px; line-height: 17px; color: #f0f0f0; white-space: pre; }
    .log-thumb { position: absolute; right: 3px; top: 167px; width: 8px; height: 21px; background: #787878; }
    .cmd-input { margin-top: 10px; height: 19px; box-sizing: border-box; border: 1px solid #777; background: #444; display: flex; align-items: center; padding-left: 2px; }
    .view { width: 417px; margin-left: 6px; display: flex; flex-direction: column; background: #2d2d2d; }
    .mini { flex: 1; background: #000; margin-bottom: 1px; padding: 59px 0 0 74px; box-sizing: border-box; }

    .right { width: 335px; margin-left: 5px; background: #2d2d2d; display: flex; flex-direction: column; }
    .options { height: 438px; display: flex; flex-direction: column; }
    .opt-body { flex: 1; padding-left: 7px; }
    .opt-l1 { margin-top: 11px; }
    .opt-c1 { margin: 10px 0 0 36px; }
    .opt-row { display: flex; align-items: center; margin-top: 10px; gap: 11px; padding-left: 7px; }
    .opt-sw { width: 18px; height: 18px; box-sizing: border-box; background: #5f8a38; border: 1px solid #000; }
    .mini-sw { width: 10px; height: 10px; background: #5f8a38; border: 1px solid #fff; margin: 0 11px 0 4px; }
    .opt-l2 { margin: 18px 0 0 7px; }
    .opt-l3 { margin: 4px 0 0 36px; }
    .opt-h { width: 272px; margin: 0 0 6px; }

    .vis { flex: 1; display: flex; flex-direction: column; min-height: 0; }
    .vis-body { padding-left: 8px; }
    .gv { display: flex; align-items: center; margin-top: 19px; }
    .gv.second { margin-top: 7px; }
    .gv-l { width: 94px; }
    .gvb { width: 70px; margin-right: 7px; }
    .grid { display: grid; grid-template-columns: 97px 26px 28px 24px 24px 25px 28px; width: 319px; align-items: center; justify-items: center; }
    .grid > :first-child { justify-self: start; padding-left: 2px; }
    .head { margin-top: 21px; height: 16px; }
    .cond { margin-top: 3px; height: 22px; border-bottom: 1px solid #eee; padding-bottom: 3px; }
    .cond-l { display: flex; align-items: center; gap: 6px; padding-left: 3px !important; }
    .alt { background: #3c3c3c; }
    .ruled { height: 22px; margin-top: 3px; }
    .ruled + .lay { margin-top: 3px; border-top: 1px solid #eee; padding-top: 4px; height: 22px; }
    .lay { height: 22px; }
    .swatch { width: 14px; height: 14px; border: 1px solid #000; box-shadow: 0 0 0 1px #000; display: block; }
    .prof-head { margin-top: 90px; height: 21px; position: relative; }
    .prof-head::before { content: ""; position: absolute; left: 2px; right: 2px; top: -4px; height: 1px; background: #eee; }
    .prof { height: 21px; }
    .prof.first { height: 22px; }
    .enable { display: flex; align-items: center; gap: 6px; margin: 9px 0 0 78px; }
    .enable .chk { width: 12px; height: 12px; box-shadow: none; }

    .status { height: 26px; flex: none; box-sizing: border-box; border-top: 1px solid #444; background: #2d2d2d; display: flex; align-items: center; white-space: nowrap; }
    .ready { width: 50px; height: 22px; margin-left: 2px; background: #00ff00; color: #000; display: flex; align-items: center; justify-content: center; }
    .s-msg { width: 731px; margin-left: 14px; }
    .s-dim { width: 104px; }
    .s-xy { width: 114px; }
    .s-mm { width: 57px; }
    .s-p { width: 21px; margin-left: 7px; }
    .s-a { width: 22px; margin-left: 8px; }
    .s-right { margin-left: auto; display: flex; align-items: center; padding-right: 15px; }
    .s-off { margin: 0 0 0 6px; width: 36px; }
    .s-tool { margin-right: 6px; }
    .s-edit { width: 87px; }
    .s-drc { width: 63px; height: 22px; background: #00ff00; color: #050; display: flex; align-items: center; gap: 7px; padding-left: 7px; box-sizing: border-box; }
    .s-cur { margin: 0 6px 0 14px; }
    .s-msg, .s-dim, .s-xy, .s-off, .s-edit { padding-top: 2px; box-sizing: border-box; }

    .task { height: 50px; flex: none; display: flex; background: linear-gradient(90deg, #1e3440, #22333f 55%, #1a2c4a); color: #fff; position: relative; }
    .start { width: 60px; display: flex; align-items: center; justify-content: center; }
    .search { width: 360px; background: #f0f0f0; color: #222; display: flex; align-items: center; padding-left: 16px; box-sizing: border-box; position: relative; overflow: hidden; border-bottom: 1px solid #aaa; }
    .search-t { font-size: 19px; margin-left: 12px; }
    .palms { margin-left: auto; margin-right: 7px; }
    .cell { width: 62px; display: flex; align-items: center; justify-content: center; position: relative; box-sizing: border-box; }
    .cell.u::after { content: ""; position: absolute; left: 6px; right: 5px; bottom: 0; height: 3px; background: #7db4dc; }
    .cell.active { background: #4d6068; border-bottom: 3px solid #7db4dc; }
    .tray { margin-left: auto; display: flex; align-items: center; }
    .weather { margin-right: 5px; }
    .temp { font-size: 19.5px; width: 119px; white-space: nowrap; }
    .t1 { margin-right: 14px; }
    .t2 { margin-right: 7px; }
    .t3 { margin-right: 9px; }
    .t4 { margin-right: 9px; }
    .t5 { margin-right: 9px; }
    .ime { font-size: 19px; width: 35px; }
    .clock { width: 73px; display: flex; flex-direction: column; align-items: center; font-size: 15px; line-height: 24px; }
    .notify { width: 50px; margin-left: 10px; align-self: stretch; background: rgba(255, 255, 255, .09); display: flex; align-items: center; justify-content: center; }
    .notify-box { width: 19px; height: 16px; border: 1px solid #fff; }
    .t-line { width: 1px; height: 46px; margin: 0 5px 0 10px; background: #9aa; }
    .mark { position: absolute; left: 1830px; top: 28px; font-size: 12.5px; color: #8d939b; white-space: nowrap; }
  `;
}
